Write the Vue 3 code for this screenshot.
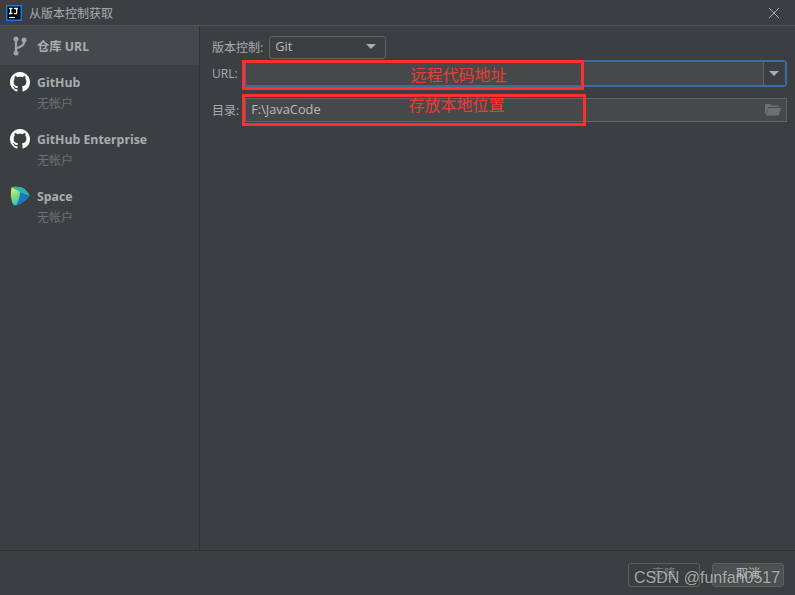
<template>
  <div class="dialog">
    <header class="titlebar">
      <svg class="logo" width="16" height="16" viewBox="0 0 16 16">
        <rect x="0.75" y="0.75" width="14.5" height="14.5" fill="#000" stroke="#087cfa" stroke-width="1.5" />
        <path d="M3 3.5h3.5M4.7 3.5v5M3 8.5h3.5M8 3.5h4M10.6 3.5v4.2q0 1-1 1H8" fill="none" stroke="#fff" stroke-width="1.3" />
        <path d="M3 12.5h6" stroke="#fff" stroke-width="1.2" />
      </svg>
      <span class="title">从版本控制获取</span>
      <svg class="close" width="12" height="12" viewBox="0 0 12 12">
        <path d="M1 1l10 10M11 1L1 11" stroke="#a9acae" stroke-width="1" fill="none" />
      </svg>
    </header>

    <div class="body">
      <aside class="sidebar">
        <div class="repo-row">
          <svg class="branch" width="16" height="20" viewBox="0 0 16 20">
            <circle cx="4" cy="3" r="2.5" fill="#a0a4a7" />
            <circle cx="4" cy="17" r="2.5" fill="#a0a4a7" />
            <circle cx="12" cy="4" r="2.5" fill="#a0a4a7" />
            <path d="M4 3v14M12 4v2.5q0 3.5-8 6" fill="none" stroke="#a0a4a7" stroke-width="2.2" />
          </svg>
          <span class="name">仓库 URL</span>
        </div>

        <div v-for="item in accounts" :key="item.name" class="account">
          <div class="account-top">
            <svg v-if="item.icon === 'github'" class="acc-icon" width="20" height="20" viewBox="0 0 16 16">
              <path fill="#fff" d="M8 0C3.58 0 0 3.58 0 8c0 3.54 2.29 6.53 5.47 7.59.4.07.55-.17.55-.38 0-.19-.01-.82-.01-1.49-2.01.37-2.53-.49-2.69-.94-.09-.23-.48-.94-.82-1.13-.28-.15-.68-.52-.01-.53.63-.01 1.08.58 1.23.82.72 1.21 1.87.87 2.33.66.07-.52.28-.87.51-1.07-1.78-.2-3.64-.89-3.64-3.95 0-.87.31-1.59.82-2.15-.08-.2-.36-1.02.08-2.12 0 0 .67-.21 2.2.82.64-.18 1.32-.27 2-.27s1.36.09 2 .27c1.53-1.04 2.2-.82 2.2-.82.44 1.1.16 1.92.08 2.12.51.56.82 1.27.82 2.15 0 3.07-1.87 3.75-3.65 3.95.29.25.54.73.54 1.48 0 1.07-.01 1.93-.01 2.2 0 .21.15.46.55.38A8.01 8.01 0 0 0 16 8c0-4.42-3.58-8-8-8z" />
            </svg>
            <svg v-else class="acc-icon" width="20" height="20" viewBox="0 0 20 20">
              <defs>
                <linearGradient id="spaceA" x1="0.1" y1="0" x2="0.6" y2="1">
                  <stop offset="0" stop-color="#f2ee62" />
                  <stop offset="0.5" stop-color="#6fdc84" />
                  <stop offset="1" stop-color="#1fb4e6" />
                </linearGradient>
              </defs>
              <path fill="url(#spaceA)" d="M1.5 1.5Q5 0 11 1.5 16 3 19.5 9.5 15 16 6 19.5 3 19.5 2 16 0 9 1.5 1.5z" />
              <path fill="#1e74c4" d="M10 6L19.5 9.5Q15 16 6 19.5 10 13 10 6z" />
              <path fill="#27b5b0" d="M1.5 1.5Q5 0 11 1.5 16 3 19.5 9.5L10 6Q6 3 1.5 1.5z" />
            </svg>
            <span class="name">{{ item.name }}</span>
          </div>
          <div class="none">无帐户</div>
        </div>
      </aside>

      <main class="content">
        <div class="line first">
          <label class="label">版本控制:</label>
          <div class="select">
            <span class="latin">Git</span>
            <i class="arrow"></i>
          </div>
        </div>
        <div class="line url">
          <label class="label">URL:</label>
          <div class="combo">
            <div class="combo-input"></div>
            <div class="combo-btn"><i class="arrow"></i></div>
          </div>
        </div>
        <div class="line dir">
          <label class="label">目录:</label>
          <div class="path">
            <span class="latin">F:\JavaCode</span>
            <svg width="16" height="13" viewBox="0 0 16 13">
              <path d="M0 1h5l1.5 1.5H14V4H3.5L1 11H0z" fill="#6b7073" />
              <path d="M3.5 5H16l-2.5 7.5H1z" fill="#6b7073" />
            </svg>
          </div>
        </div>
      </main>
    </div>

    <footer class="footer">
      <button class="btn">克隆</button>
      <button class="btn cancel">取消</button>
    </footer>

    <!-- 标注 -->
    <div class="mark mark-url">远程代码地址</div>
    <div class="mark mark-dir">存放本地位置</div>
    <div class="watermark">CSDN @funfan0517</div>
  </div>
</template>

<script setup>
const accounts = [
  { name: 'GitHub', icon: 'github' },
  { name: 'GitHub Enterprise', icon: 'github' },
  { name: 'Space', icon: 'space' }
]
</script>

<style>
html,
body {
  margin: 0;
  background: #3c3f41;
}
</style>

<style scoped>
.dialog {
  position: relative;
  width: 795px;
  height: 595px;
  display: flex;
  flex-direction: column;
  overflow: hidden;
  background: #3c3f41;
  color: #bbbbbb;
  font-family: "Open Sans", "Noto Sans CJK SC", sans-serif;
  font-size: 12px;
}

.latin {
  font-size: 12.8px;
}

.titlebar {
  height: 25px;
  flex: none;
  display: flex;
  align-items: center;
  padding: 0 15px 0 6px;
  border-bottom: 1px solid #505254;
}

.logo {
  margin-right: 7px;
}

.title {
  flex: 1;
  color: #a9acae;
  font-size: 12px;
}

.body {
  flex: 1;
  display: flex;
  min-height: 0;
}

.sidebar {
  width: 199px;
  flex: none;
  border-right: 1px solid #323232;
}

.repo-row {
  height: 39px;
  display: flex;
  align-items: center;
  padding-left: 12px;
  background: #46494b;
}

.branch {
  margin-right: 9px;
}

.name {
  font-weight: 700;
  font-size: 12.3px;
  color: #a9adb0;
}

.account {
  height: 57px;
  padding: 7px 0 0 10px;
  box-sizing: border-box;
}

.account-top {
  height: 20px;
  display: flex;
  align-items: center;
}

.acc-icon {
  margin-right: 7px;
}

.none {
  margin: 2px 0 0 27px;
  color: #6d7072;
}

.content {
  flex: 1;
  padding: 9px 7px 0 12px;
}

.line {
  display: flex;
  align-items: center;
}

.label {
  color: #a9acae;
}

.first {
  height: 24px;
}

.url {
  height: 27px;
  margin-top: 1px;
}

.dir {
  height: 24px;
  margin-top: 11px;
}

.select {
  width: 117px;
  height: 23px;
  margin-left: 6px;
  padding: 0 9px 2px 5px;
  box-sizing: border-box;
  display: flex;
  align-items: center;
  justify-content: space-between;
  border: 1px solid #646464;
  border-radius: 3px;
}

.arrow {
  width: 0;
  height: 0;
  border-left: 5px solid transparent;
  border-right: 5px solid transparent;
  border-top: 5px solid #a9acae;
}

.combo {
  width: 543px;
  height: 27px;
  margin-left: 6px;
  box-sizing: border-box;
  display: flex;
  border: 2.5px solid #3e6c9e;
  border-radius: 4px;
}

.combo-input {
  flex: 1;
  background: #45494a;
}

.combo-btn {
  width: 21px;
  display: flex;
  align-items: center;
  justify-content: center;
  border-left: 1px solid #646464;
  background: #3c3f41;
}

.path {
  width: 542px;
  height: 24px;
  margin-left: 6px;
  padding: 0 5px 2px 5px;
  box-sizing: border-box;
  display: flex;
  align-items: center;
  justify-content: space-between;
  border: 1px solid #646464;
  background: #45494a;
}

.footer {
  height: 45px;
  flex: none;
  display: flex;
  justify-content: flex-end;
  gap: 12px;
  padding: 12px 11px 0 0;
  box-sizing: border-box;
  border-top: 1px solid #323232;
}

.btn {
  width: 72px;
  height: 24px;
  padding: 0 0 4px;
  border: 1px solid #5e6060;
  border-radius: 3px;
  background: #3c3f41;
  color: #777a7c;
  font-family: inherit;
  font-size: 12px;
}

.cancel {
  background: #4c5052;
  color: #bbbbbb;
}

.mark {
  position: absolute;
  box-sizing: border-box;
  border: 3px solid #fb3030;
  color: #f03a33;
  font-size: 16px;
  text-align: center;
}

.mark-url {
  left: 242px;
  top: 60px;
  width: 342px;
  height: 30px;
  padding-left: 91px;
  line-height: 24px;
}

.mark-dir {
  left: 242px;
  top: 94px;
  width: 344px;
  height: 32px;
  padding-left: 85px;
  line-height: 16px;
}

.watermark {
  position: absolute;
  left: 634px;
  top: 569px;
  font-family: "Liberation Sans", sans-serif;
  font-size: 16px;
  color: rgba(255, 255, 255, 0.62);
  text-shadow: 0 0 1px rgba(0, 0, 0, 0.5);
}
</style>
